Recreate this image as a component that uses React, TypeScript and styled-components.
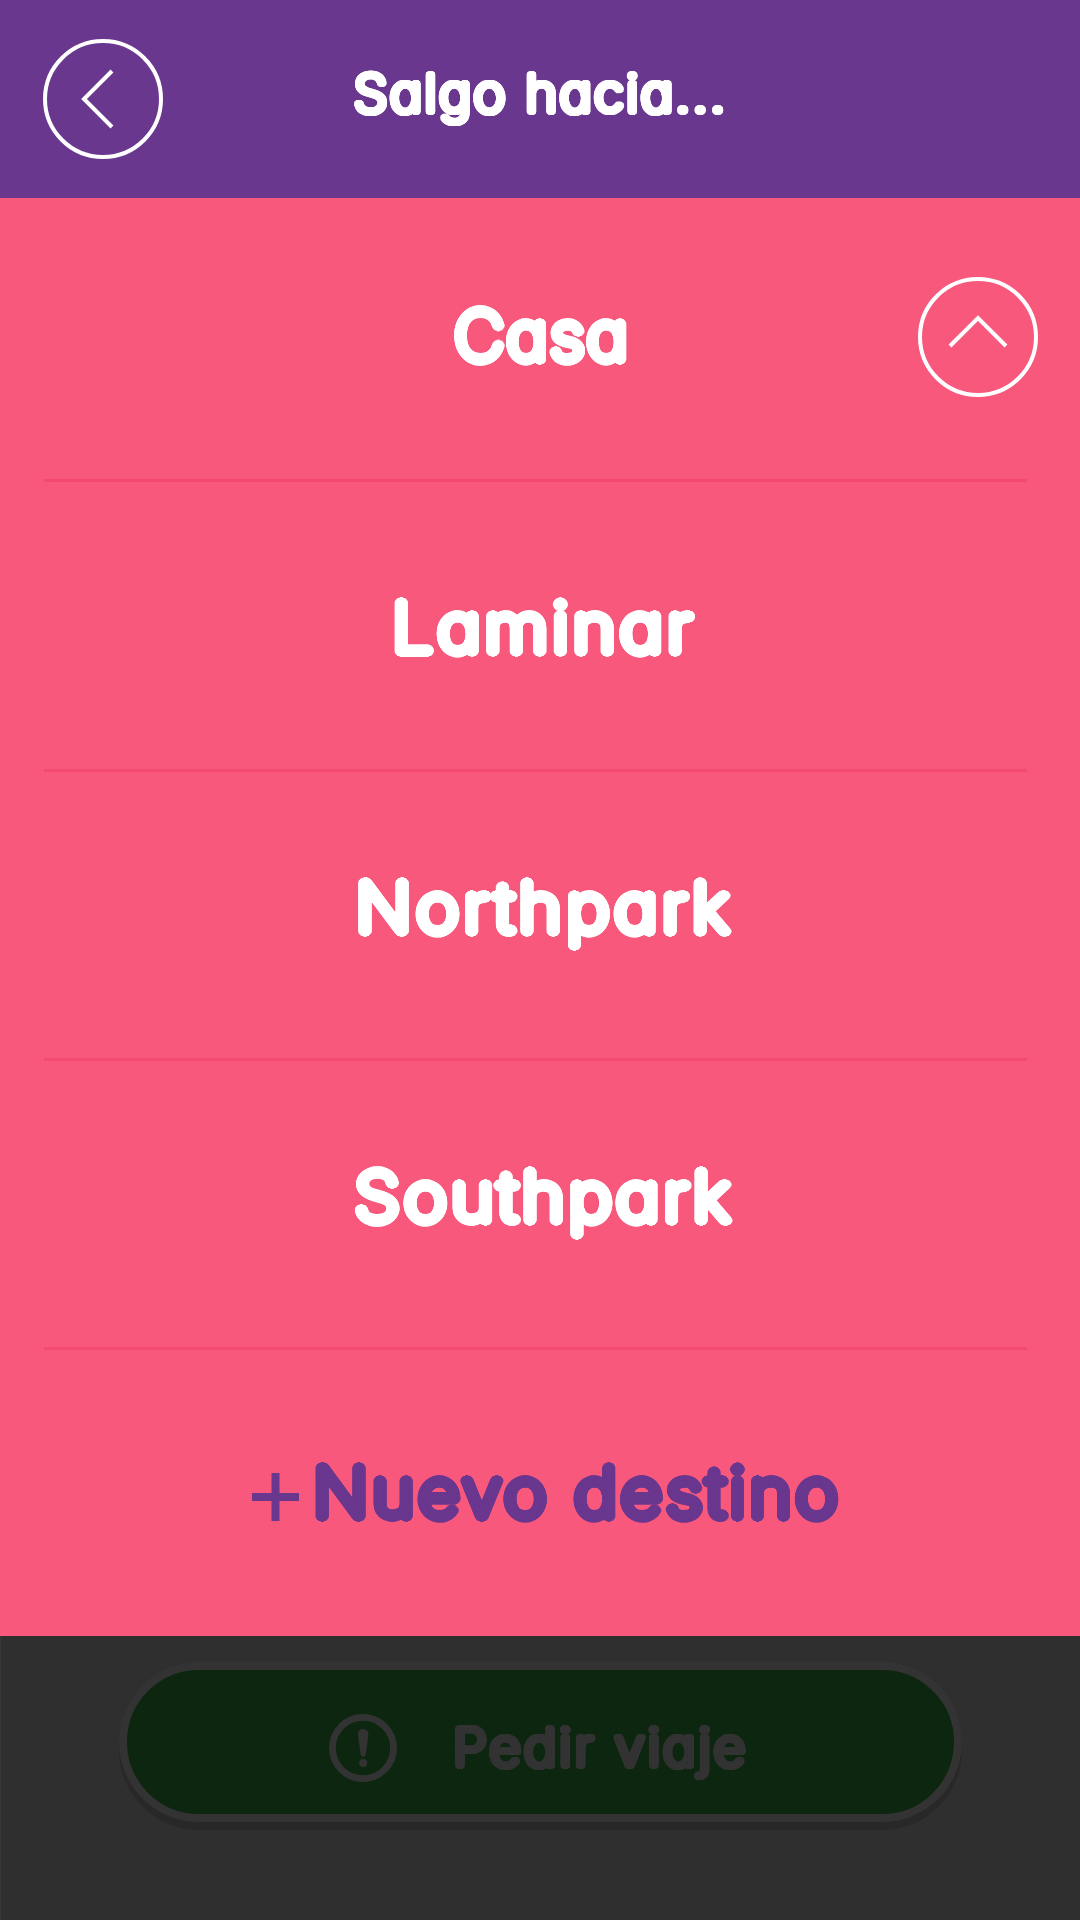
import React from "react";
import styled, { createGlobalStyle } from "styled-components";

const ring = (r: number) =>
  [r, r * 0.55]
    .flatMap((radius) =>
      Array.from({ length: 24 }, (_, i) => {
        const a = (i * Math.PI) / 12;
        return `${(Math.cos(a) * radius).toFixed(2)}px ${(Math.sin(a) * radius).toFixed(2)}px 0 currentColor`;
      })
    )
    .join(", ");

const GlobalStyle = createGlobalStyle`
  *, *::before, *::after { box-sizing: border-box; }
  body { margin: 0; background: #2f2f2f; }
`;

const Screen = styled.main`
  display: flex;
  flex-direction: column;
  width: 1080px;
  height: 1920px;
  overflow: hidden;
  background: #2f2f2f;
  color: #fff;
  font-family: Inter, "Liberation Sans", sans-serif;
`;

/* Light letters thickened by a circular outline, which rounds every stroke end. */
const RoundedText = styled.span<{ $small?: boolean; $spacing: number; $stretch?: number }>`
  display: block;
  white-space: pre;
  font-size: ${(p) => (p.$small ? 52 : 68)}px;
  line-height: ${(p) => (p.$small ? 60 : 80)}px;
  font-weight: 200;
  font-feature-settings: "cv11", "calt" 0;
  letter-spacing: ${(p) => p.$spacing}px;
  margin-right: ${(p) => -p.$spacing}px;
  text-shadow: ${(p) => ring(p.$small ? 3.4 : 4.6)};
  transform: scaleX(${(p) => p.$stretch ?? 1});
`;

const Header = styled.header`
  display: grid;
  grid-template-columns: 120px 1fr 120px;
  align-items: center;
  height: 198px;
  padding: 0 43px;
  background: #6a378f;
`;

const Title = styled.h1`
  display: flex;
  justify-content: center;
  margin: 0 0 10px;
`;

const RoundButton = styled.button`
  display: block;
  width: 120px;
  height: 120px;
  padding: 0;
  border: 0;
  background: none;
  color: inherit;
`;

const List = styled.ul`
  display: flex;
  flex-direction: column;
  height: 1438px;
  margin: 0;
  padding: 0 42px 0 44px;
  list-style: none;
  background: #f9587d;
`;

const Row = styled.li<{ $height: number; $top: number; $accent?: boolean }>`
  display: grid;
  grid-template-columns: 120px 1fr 120px;
  align-items: start;
  height: ${(p) => p.$height}px;
  padding-top: ${(p) => p.$top}px;
  color: ${(p) => (p.$accent ? "#6a378f" : "#fff")};
`;

const Divider = styled.li`
  width: 983px;
  height: 3px;
  background: #f54a70;
`;

const Label = styled.div<{ $top?: number; $indent?: number }>`
  display: flex;
  grid-column: 2;
  justify-content: center;
  padding-top: ${(p) => p.$top ?? 0}px;
  padding-left: ${(p) => p.$indent ?? 0}px;
`;

const PlusIcon = styled.svg`
  flex: none;
  width: 47px;
  height: 48px;
  margin: 21px 29px 0 -7px;
`;

const Footer = styled.footer`
  flex: 1;
  padding: 26px 118px 0 118px;
  border-left: 1px solid #363636;
`;

const Request = styled.button`
  display: flex;
  align-items: flex-start;
  width: 843px;
  height: 160px;
  padding: 44px 0 0 202px;
  border: 8px solid #333;
  border-radius: 80px;
  background: #0d260f;
  color: #333;
  font: inherit;
  box-shadow: 0 8px 0 #282828;
`;

const RequestLabel = styled.div`
  margin: 4px 0 0 63px;
`;

export default function App() {
  return (
    <Screen>
      <GlobalStyle />
      <Header>
        <RoundButton aria-label="Volver">
          <svg width="120" height="120" fill="none" stroke="currentColor" strokeWidth="4">
            <circle cx="60" cy="60" r="58" />
            <path d="M69 32 41 60l28 28" />
          </svg>
        </RoundButton>
        <Title>
          <RoundedText $small $spacing={2.4} $stretch={1.04}>Salgo hacia...</RoundedText>
        </Title>
      </Header>
      <List>
        <Row $height={281} $top={79}>
          <Label $top={18}><RoundedText $spacing={2} $stretch={1.02}>Casa</RoundedText></Label>
          <RoundButton aria-label="Cerrar lista">
            <svg width="120" height="120" fill="none" stroke="currentColor" strokeWidth="4">
              <circle cx="60" cy="60" r="58" />
              <path d="M32 69 60 41l28 28" />
            </svg>
          </RoundButton>
        </Row>
        <Divider />
        <Row $height={287} $top={105}>
          <Label $indent={3}><RoundedText $spacing={4} $stretch={1.07}>Laminar</RoundedText></Label>
        </Row>
        <Divider />
        <Row $height={286} $top={95}>
          <Label $indent={3}><RoundedText $spacing={4.5} $stretch={1.07}>Northpark</RoundedText></Label>
        </Row>
        <Divider />
        <Row $height={286} $top={95}>
          <Label $indent={2}><RoundedText $spacing={4} $stretch={1.07}>Southpark</RoundedText></Label>
        </Row>
        <Divider />
        <Row $height={286} $top={102} $accent>
          <Label>
            <PlusIcon viewBox="0 0 47 48" fill="none" stroke="currentColor" strokeWidth="8">
              <path d="M0 24h47M23.5 0v48" />
            </PlusIcon>
            <RoundedText $spacing={3.6} $stretch={1.06}>Nuevo destino</RoundedText>
          </Label>
        </Row>
      </List>
      <Footer>
        <Request>
          <svg width="68" height="68" viewBox="0 0 68 68">
            <circle cx="34" cy="34" r="30.6" fill="none" stroke="currentColor" strokeWidth="6.8" />
            <path d="M29 20a5.2 5.2 0 0 1 10.4 0q0 2-2.7 20.500a2.500 2.200 0 0 1-5 0Q29 22 29 20Z" fill="currentColor" />
            <circle cx="34.200" cy="49" r="4" fill="currentColor" />
          </svg>
          <RequestLabel>
            <RoundedText $small $spacing={2.9} $stretch={1.05}>Pedir viaje</RoundedText>
          </RequestLabel>
        </Request>
      </Footer>
    </Screen>
  );
}
